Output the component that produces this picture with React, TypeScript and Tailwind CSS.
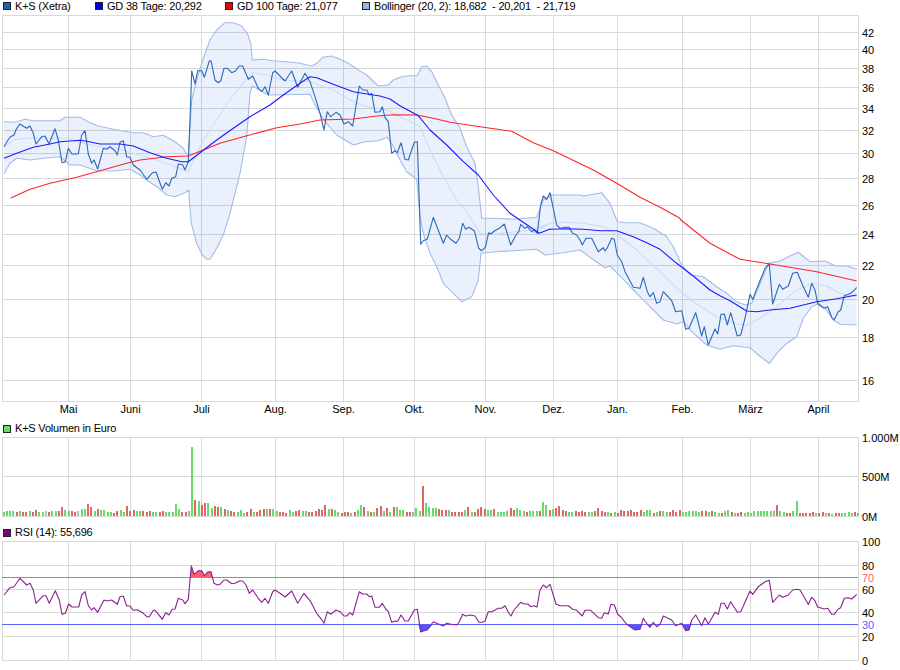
// K+S price chart: three stacked panels (price, volume, RSI) with legends
type Swatch = { color: string; label: string; width?: string };

// traced points are stored at 3x, relative to a crop origin
const trace = (s: string, ox: number, oy: number) =>
  s
    .split(" ")
    .map((p) => {
      const [x, y] = p.split(",").map(Number);
      return `${(ox + x / 3).toFixed(1)},${(oy + y / 3).toFixed(1)}`;
    })
    .join(" ");

const gridX = [68, 130, 201, 275, 343, 414, 485, 553, 617, 682, 750, 818];
const months = ["Mai", "Juni", "Juli", "Aug.", "Sep.", "Okt.", "Nov.", "Dez.", "Jan.", "Feb.", "März", "April"];

const priceRows: [string, number][] = [
  ["42", 32], ["40", 49], ["38", 68], ["36", 87], ["34", 108], ["32", 130], ["30", 153],
  ["28", 178], ["26", 205], ["24", 234], ["22", 265], ["20", 299], ["18", 337], ["16", 380],
];

const close = [
  trace("12,440 24,420 32,410 42,405 50,385 60,372 72,380 80,385 90,378 100,400 108,432 125,410 135,408 147,432 165,386 175,420 186,488 196,485 205,445 216,462 235,462 245,405 255,392 265,462 275,490 282,480 293,507 310,445 320,448 330,440 345,452 352,465 360,427 370,422 380,470 390,472 400,495 420,510 440,538 458,518 468,516 487,568 497,548 507,558 515,535 527,530 535,492 548,495 555,510 565,485 570,360 575,213 585,252 593,212 605,212 613,232 628,183 633,182 645,240 655,248 662,243 672,205 682,205 695,218 705,214 718,198 728,198 745,238 758,228 775,265 785,275 795,260 805,285 818,218 825,213 840,228 855,243 875,213 893,262 915,220 930,245 945,290 960,340 972,390 982,335 992,350 1008,337 1020,345 1032,372 1045,365 1058,378 1078,258 1088,270 1100,270 1108,285 1115,280 1125,337 1140,335 1147,320 1155,352 1165,365 1175,460 1185,452 1192,458 1203,428 1215,478 1225,480 1243,427 1252,425", 0, 0),
  trace("122,553 130,542 142,537 160,472 190,550 200,525 212,538 228,550 238,535 248,490 257,508 266,502 283,512 296,565 305,572 316,562 326,518 332,522 343,513 358,505 373,492 392,555 408,525 416,515 422,493 434,505 442,500 455,515 463,510 472,520 482,435 490,408 500,418 510,398 530,495 540,505 555,502 567,502 578,520 590,525 600,540", 380, 60),
  trace("397,135 408,115 425,115 445,155 460,143 465,153 472,143 485,115 493,118 502,165 515,185 525,215 550,262 570,265 580,232 592,275 600,290 610,278 620,310 630,305 640,275 665,302 677,335 695,332 707,388 717,385 737,338 755,408 763,380 775,435 795,387 803,402 813,343 823,342 832,375 842,338 862,408 872,405 885,355 900,283 908,298 925,255 945,205 958,192 968,312 988,253 998,268 1015,258 1028,220 1042,217 1060,260 1075,292 1085,250 1095,270 1103,310 1122,325 1133,320 1145,352 1152,360 1165,335 1172,330 1183,287 1195,283 1205,278 1220,263", 450, 200),
].join(" ");

const upper = [
  trace("12,365 45,367 75,358 100,362 150,362 180,362 195,352 240,352 270,368 295,378 340,388 400,398 430,398 460,410 490,406 525,425 550,445 565,470 575,300 590,240 610,175 630,120 650,90 675,68 700,68 725,78 742,100 752,130 757,180 790,178 820,182 860,185 900,190 935,198 950,190 968,172 995,168 1020,178 1045,190 1075,210 1100,225 1135,258", 0, 0),
  trace("25,75 40,60 60,52 85,47 112,47 125,20 140,18 155,35 175,75 195,115 215,165 240,205 260,260 285,310 295,380 305,475 350,475 400,478 470,472 480,445 490,420 515,405 600,405", 380, 60),
  trace("400,-12 455,-22 480,10 502,65 530,68 570,68 610,85 650,110 670,140 690,185 700,200 720,225 760,230 800,260 830,280 860,305 885,315 905,310 925,265 955,190 990,183 1020,168 1045,157 1080,185 1125,183 1155,197 1190,198 1220,207", 450, 200),
].join(" ");

const lower = [
  trace("12,522 30,490 50,475 90,480 130,475 180,470 210,495 240,495 290,512 340,513 390,508 420,525 440,540 470,560 500,585 525,590 555,578 567,570", 0, 0),
  trace("568,0 574,70 590,130 605,162 620,178 630,178 650,145 670,105 690,40 700,0", 0, 200),
  trace("720,520 740,410 750,280 757,258 805,285 930,283 945,315 975,365 1010,405 1060,435 1095,425 1135,422", 0, 0),
  trace("22,232 35,250 60,300 80,335 110,358 120,470 130,520 150,580 170,620 190,670 215,695 245,725 275,710 295,660 303,580 350,575 400,572 470,568 495,585 550,578 600,570", 380, 60),
  trace("420,172 465,203 480,198 520,238 560,280 600,320 640,360 680,372 700,365 725,395 770,435 810,448 850,437 900,443 925,465 958,490 985,455 1010,430 1040,410 1060,355 1085,320 1100,313 1125,325 1150,360 1170,373 1220,375", 450, 200),
].join(" ");

const band = `${upper} ${lower.split(" ").reverse().join(" ")}`;

const middle = [
  trace("12,440 40,420 75,415 110,415 150,415 200,415 250,430 300,440 350,445 400,460 440,470 500,490 565,515 610,420 650,360 700,285 757,218 800,225 850,240 930,245 1000,270 1050,300 1100,320", 0, 0),
  trace("20,150 50,165 100,190 120,200 150,270 190,350 230,420 260,455 300,520 350,522 450,510 500,495", 380, 60),
  trace("250,100 300,70 350,67 400,70 460,80 510,110 560,150 620,205 680,265 730,305 800,350 860,372 890,375 930,355 980,320 1040,270 1090,250 1130,258 1170,280 1220,290", 450, 200),
].join(" ");

const gd38 = [
  trace("12,475 50,460 100,442 150,432 180,425 240,421 260,424 300,432 360,432 400,438 450,458 500,475 545,485 565,485 600,458 650,420 700,385 750,350 810,315 850,285 900,250 930,230 950,233 1000,253 1060,275 1120,285", 0, 0),
  trace("0,108 30,117 60,137 115,167 150,210 200,255 250,305 295,345 340,405 390,460 478,520 510,507", 380, 60),
  trace("300,88 350,86 400,88 450,92 500,92 550,110 590,128 630,148 680,190 730,228 780,270 810,287 840,302 890,333 920,335 960,330 1020,325 1060,315 1100,305 1160,296 1220,285", 450, 200),
].join(" ");

const gd100 = [
  trace("32,594 90,568 150,550 230,532 300,512 380,490 420,480 500,470 565,468 610,450 660,430 730,410 830,383 900,372 960,360 1060,357 1130,348 1180,344 1250,345 1300,355", 0, 0),
  trace("0,367 100,382 185,394 250,428 310,452 430,510 500,550 570,592 630,622 690,655", 450, 0),
  trace("690,58 780,130 870,178 960,192 1100,215 1220,243", 450, 200),
].join(" ");

const rsi = [
  trace("12,180 30,158 42,155 60,130 80,150 90,145 100,165 108,205 130,182 138,182 148,205 166,167 178,195 186,238 196,235 206,207 216,216 236,216 245,180 255,170 265,212 275,225 282,218 293,232 312,195 320,198 335,195 352,208 360,185 370,183 380,213 390,213 400,226 412,224 430,235 440,245 448,245 460,226 466,226 487,253 497,233 507,240 517,223 525,222 535,190 548,195 555,206 565,193 574,92 582,118 595,107 605,107 613,122 625,110 633,110 642,145 652,150 660,148 672,135 680,135 695,146 705,145 718,138 728,138 738,150 748,175 758,165 775,190 785,202 795,190 805,205 818,170 825,165 840,175 855,186 875,168 893,205 912,175 932,200 950,235 962,250 972,265 982,230 992,238 1008,225 1020,230 1032,243 1040,243 1050,233 1058,240 1078,170 1088,177 1100,177 1108,185 1115,183 1125,217 1138,217 1147,205 1157,222 1165,230 1175,262 1185,258 1193,259 1203,240 1215,258 1225,258 1243,225 1252,223 1262,291 1272,287 1282,285 1300,260 1310,265 1330,273 1340,265", 0, 535),
  trace("0,267 20,270 27,262 38,238 48,243 60,240 75,243 87,262 97,262 105,258 115,230 125,230 145,220 155,220 165,212 175,232 183,243 192,225 212,202 222,207 233,207 242,215 252,212 261,216 270,165 280,150 290,158 300,148 318,207 330,212 345,212 355,212 368,223 380,226 397,243 405,226 422,226 445,248 455,250 463,233 475,237 483,208 493,210 503,238 513,246 530,268 555,285 570,283 580,250 592,268 600,277 610,262 620,275 630,268 640,243 665,255 677,272 695,265 707,287 717,285 725,255 737,240 755,272 765,248 775,268 795,232 805,238 813,205 823,205 832,222 842,200 862,232 872,230 885,202 900,168 908,178 925,155 945,140 958,136 968,202 988,180 998,187 1015,180 1028,165 1042,163 1050,165 1075,208 1085,187 1095,197 1103,216 1122,222 1133,220 1145,238 1152,238 1165,222 1172,218 1183,190 1195,188 1205,192 1220,178", 450, 535),
].join(" ");

const rsiHigh = [trace("571,128 574,92 582,118 595,107 605,107 613,122 625,110 633,110 638,128", 0, 535)];
const rsiLow = [
  trace("1255,268 1262,291 1272,287 1282,285 1298,268", 0, 535),
  trace("530,268 555,285 570,283 577,268", 450, 535),
  trace("592,268 600,277 605,268", 450, 535),
  trace("680,268 695,268 707,287 717,285 723,268", 450, 535),
];

// g / r / n = up, down, unchanged day; number = bar height in px
const volume =
  "g4 g5 g5 g5 r4 g5 r4 r4 g5 r4 r6 g4 g4 n5 r4 g5 g5 r5 r9 g6 g5 r5 r4 n5 g7 g7 r12 r9 g5 r7 g6 g6 g4 g4 r3 r5 g6 g4 r10 r5 r6 g5 g5 r5 r4 r5 g4 g4 r4 r5 g4 g4 g4 g12 g7 r4 r4 g5 g69 r16 g15 r11 r13 g13 g8 r10 r9 g9 r7 g6 r5 r4 g4 g6 g3 r4 r7 g4 r4 r6 r7 g7 r7 g7 g5 r4 r4 r3 g6 g4 r5 r6 g5 g5 r4 r4 r5 r7 r6 r11 g7 r7 g6 g4 r3 r4 r4 g3 r4 g6 g11 r9 g5 r4 g4 r8 r10 g5 r8 g4 r9 g9 g6 g6 r4 r4 g4 g8 g5 r30 g13 g9 g8 g8 r7 r6 r6 g6 r4 " +
  "r4 r4 r4 g6 r9 g4 r4 r7 r9 r7 g6 g6 r7 g4 g4 g4 g5 r8 r6 g8 g6 g5 r4 g5 g5 g5 r5 g14 g11 r6 g7 r8 r10 r6 r5 g4 g4 r5 r4 r5 r4 g4 g4 r5 r8 r5 r4 g4 r3 g4 r3 r6 r5 r5 r6 r4 r4 r6 g4 g6 g6 r3 g4 r5 g5 g4 r4 r6 r4 r6 g4 g4 g5 g5 g5 g4 r5 r5 g4 r5 g4 g3 r3 g5 g6 r4 g3 r3 r4 g3 g4 g3 g5 g5 g5 g5 g5 g5 g5 r11 g5 g4 r3 r3 g5 g15 r3 r3 r3 r3 r4 g3 r3 r4 g3 r3 g2 r3 r3 g3 g3 g4 g3 r4 g3 g1";

const barFill: Record<string, string> = { g: "#66dd66", r: "#dd6666", n: "#bbbbbb" };

function Legend({ items, className = "" }: { items: Swatch[]; className?: string }) {
  return (
    <div className={`flex h-[15px] items-center pl-[3px] text-[11px] leading-none tracking-[-0.2px] text-black ${className}`}>
      {items.map((item) => (
        <div key={item.label} className={`flex items-center gap-1 ${item.width ?? ""}`}>
          <span className="h-[8px] w-[8px] border border-[#222222]" style={{ backgroundColor: item.color }} />
          <span className="whitespace-pre">{item.label}</span>
        </div>
      ))}
    </div>
  );
}

function Grid({ top, bottom, rows }: { top: number; bottom: number; rows: number[] }) {
  return (
    <g stroke="#d9d9d9" shapeRendering="crispEdges">
      {rows.map((y) => (
        <line key={y} x1={2} x2={858} y1={y + 0.5} y2={y + 0.5} />
      ))}
      {[2, ...gridX, 858].map((x) => (
        <line key={x} x1={x + 0.5} x2={x + 0.5} y1={top} y2={bottom + 1} />
      ))}
    </g>
  );
}

function Line({ points, color, width = 1.1 }: { points: string; color: string; width?: number }) {
  return <polyline points={points} fill="none" stroke={color} strokeWidth={width} strokeLinejoin="round" />;
}

function PricePanel() {
  return (
    <svg className="block" width={900} height={406} viewBox="0 15 900 406">
      <Grid top={15} bottom={401} rows={[15, ...priceRows.map((r) => r[1]), 401]} />
      <polygon points={band} fill="#3078e8" fillOpacity={0.1} />
      <Line points={upper} color="#a3bbe8" />
      <Line points={lower} color="#a3bbe8" />
      <Line points={middle} color="#c9dcf8" />
      <Line points={close} color="#2c68b8" />
      <Line points={gd100} color="#ff2525" />
      <Line points={gd38} color="#1a1aff" />
      {priceRows.map(([label, y]) => (
        <text key={label} x={862} y={y + 4.5} fill="#000000">
          {label}
        </text>
      ))}
      {months.map((m, i) => (
        <text key={m} x={gridX[i] + 0.5} y={413} textAnchor="middle" fill="#000000">
          {m}
        </text>
      ))}
    </svg>
  );
}

function VolumePanel() {
  const bars = volume.split(" ");
  return (
    <svg className="block overflow-visible" width={900} height={89} viewBox="0 436 900 89">
      <Grid top={437} bottom={516} rows={[437, 476, 516]} />
      <g shapeRendering="crispEdges">
        {bars.map((b, i) => {
          const h = Number(b.slice(1));
          return <rect key={i} x={Math.floor(3 + i * 3.25)} y={516 - h} width={2} height={h} fill={barFill[b[0]]} />;
        })}
      </g>
      <text x={862} y={442} fill="#000000">1.000M</text>
      <text x={862} y={481} fill="#000000">500M</text>
      <text x={862} y={521} fill="#000000">0M</text>
    </svg>
  );
}

function RsiPanel() {
  const labels: [string, number, string][] = [
    ["100", 541, "#000000"], ["80", 565, "#000000"], ["70", 577, "#ff6060"], ["60", 589, "#000000"],
    ["40", 612, "#000000"], ["30", 624, "#6060ff"], ["20", 636, "#000000"], ["0", 660, "#000000"],
  ];
  return (
    <svg className="block overflow-visible" width={900} height={130} viewBox="0 540 900 130">
      <Grid top={541} bottom={660} rows={[541, 565, 589, 612, 636, 660]} />
      {rsiHigh.map((p) => (
        <polygon key={p} points={p} fill="#ff5c6c" />
      ))}
      {rsiLow.map((p) => (
        <polygon key={p} points={p} fill="#5555ff" />
      ))}
      <g shapeRendering="crispEdges">
        <line x1={2} x2={858} y1={577.5} y2={577.5} stroke="#ff6060" />
        <line x1={2} x2={858} y1={624.5} y2={624.5} stroke="#6060ff" />
      </g>
      <Line points={rsi} color="#8c2090" />
      {labels.map(([label, y, color]) => (
        <text key={label} x={862} y={y + 4.5} fill={color}>
          {label}
        </text>
      ))}
    </svg>
  );
}

export default function App() {
  return (
    <div className="h-[670px] w-[900px] overflow-hidden bg-white font-['Liberation_Sans',Arial,sans-serif] text-[11px]">
      <Legend
        className="pb-[3px]"
        items={[
          { color: "#1f5fb4", label: "K+S (Xetra)", width: "w-[92px]" },
          { color: "#0000e6", label: "GD 38 Tage: 20,292", width: "w-[130px]" },
          { color: "#ee0000", label: "GD 100 Tage: 21,077", width: "w-[137px]" },
          { color: "#9db6e2", label: "Bollinger (20, 2): 18,682  - 20,201  - 21,719" },
        ]}
      />
      <PricePanel />
      <Legend items={[{ color: "#66dd66", label: "K+S Volumen in Euro" }]} />
      <VolumePanel />
      <Legend items={[{ color: "#800080", label: "RSI (14): 55,696" }]} />
      <RsiPanel />
    </div>
  );
}
